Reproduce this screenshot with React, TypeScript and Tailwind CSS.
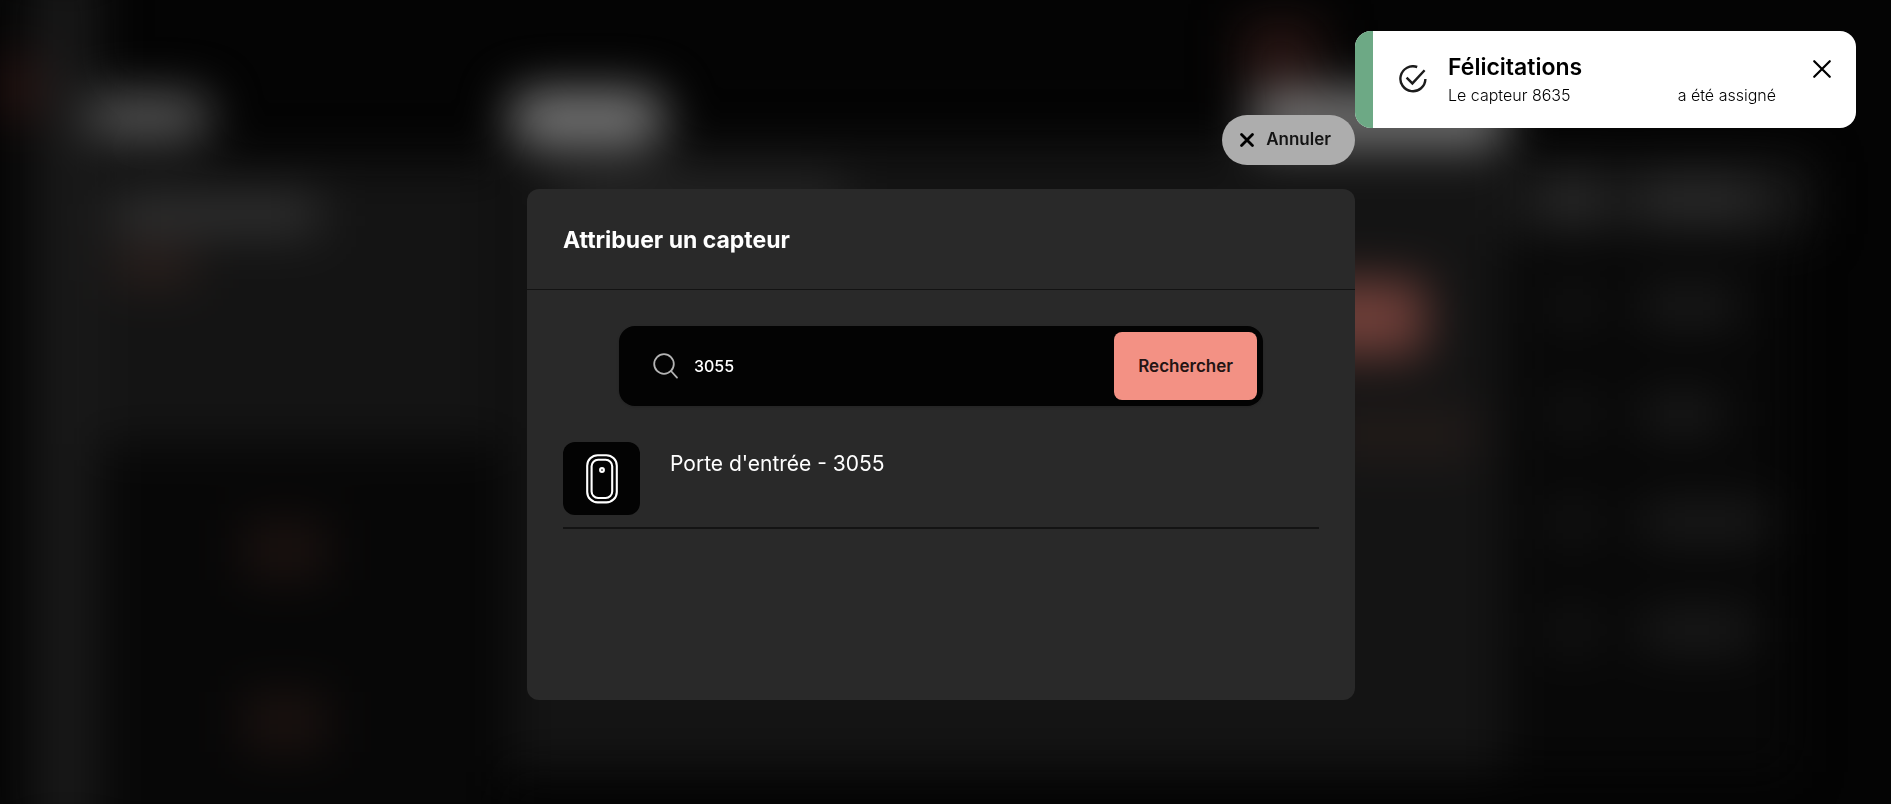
import { useState } from "react";

const menuItems = [
  { id: 1, width: "w-24" },
  { id: 2, width: "w-20" },
  { id: 3, width: "w-32" },
  { id: 4, width: "w-28" },
];

const SearchIcon = () => (
  <svg width="26" height="26" viewBox="0 0 26 26" fill="none" stroke="#b4b4b4" strokeWidth="1.8" strokeLinecap="round" aria-hidden="true">
    <circle cx="11" cy="11" r="9.8" />
    <path d="M18 18L24 24.6" />
  </svg>
);

const SensorIcon = () => (
  <svg width="32" height="50" viewBox="0 0 32 50" fill="none" stroke="#fff" strokeWidth="2.1" aria-hidden="true">
    <rect x="1.2" y="1.2" width="29.6" height="47.2" rx="10.5" />
    <rect x="5.6" y="5.8" width="20.6" height="38.2" rx="6.5" />
    <circle cx="16" cy="16" r="1.9" />
  </svg>
);

const CheckIcon = () => (
  <svg width="28" height="28" viewBox="0 0 28 28" fill="none" stroke="#1c1c1c" strokeWidth="2.4" aria-hidden="true">
    <path d="M18.2 2A12.5 12.5 0 1 0 26.4 14" />
    <path d="M7.6 12.6L13.4 18.4L25.6 5.2" />
  </svg>
);

const CloseIcon = ({ size, stroke }: { size: number; stroke: number }) => (
  <svg width={size} height={size} viewBox="0 0 18 18" fill="none" stroke="currentColor" strokeWidth={stroke} strokeLinecap="round" aria-hidden="true">
    <path d="M2 2L16 16M16 2L2 16" />
  </svg>
);

// Dashboard that stays behind the dialog, dimmed and out of focus
const Backdrop = () => (
  <div className="fixed inset-0 -z-10 overflow-hidden bg-[#040404]" aria-hidden="true">
    <div className="-my-8 flex h-[calc(100%+64px)] py-8 blur-[24px]">
      <div className="-my-8 flex w-9 shrink-0 bg-[#080808] pt-[88px]">
        <div className="h-[64px] w-[50px] shrink-0 bg-[#2a1412]" />
      </div>
      <div className="-my-8 w-[62px] shrink-0 bg-[#191919]" />

      <div className="flex w-[402px] shrink-0 flex-col pt-[94px]">
        <div className="-ml-3 h-[46px] w-[126px] rounded-full bg-[#585858]" />
        <div className="mt-5 h-[284px] bg-[#141414] pl-4 pt-9">
          <div className="h-9 w-[204px] bg-[#343434]" />
          <div className="mt-4 h-9 w-[80px] bg-[#2c201d]" />
        </div>
        <div className="-mb-8 flex grow flex-col gap-[112px] bg-[#070707] pl-[145px] pt-[76px]">
          <div className="h-[60px] w-[84px] bg-[#1b1210]" />
          <div className="h-[60px] w-[84px] bg-[#1b1210]" />
        </div>
      </div>

      <div className="ml-2 flex grow flex-col pb-8 pt-5">
        <div className="flex items-end justify-between">
          <div className="h-[56px] w-[158px] rounded-full bg-[#787878]" />
          <div className="w-[276px]">
            <div className="ml-3 h-[70px] w-[80px] bg-[#261412]" />
            <div className="ml-6 h-[56px] bg-[#747474]" />
          </div>
        </div>
        <div className="flex grow flex-col items-end bg-[#141414] pt-[30px]">
          <div className="mr-auto ml-14 h-9 w-[280px] bg-[#272727]" />
          <div className="mr-[80px] mt-[68px] h-[76px] w-[170px] bg-[#703f39]" />
          <div className="mr-7 mt-[54px] h-12 w-[150px] bg-[#221b19]" />
        </div>
      </div>

      <div className="flex w-[386px] shrink-0 flex-col pb-8 pt-[162px]">
        <div className="mr-[80px] flex h-[72px] items-center gap-12 bg-[#191919] pl-12">
          <div className="h-12 w-10 bg-[#2e2e2e]" />
          <div className="h-10 w-28 bg-[#2c2c2c]" />
        </div>
        <div className="mr-[100px] flex grow flex-col gap-[68px] bg-[#080808] pl-12 pt-[52px]">
          {menuItems.map((item) => (
            <div key={item.id} className="flex items-center gap-12">
              <div className="h-10 w-10 bg-[#171717]" />
              <div className={`h-9 bg-[#1d1d1d] ${item.width}`} />
            </div>
          ))}
        </div>
      </div>
    </div>
  </div>
);

const Toast = ({ onClose }: { onClose: () => void }) => (
  <div role="status" className="fixed right-[35px] top-[31px] flex h-[97px] w-[501px] overflow-hidden rounded-2xl bg-white text-black">
    <div className="w-[18px] shrink-0 bg-[#6da985]" />
    <div className="flex grow items-start pl-[26px] pr-6">
      <div className="pt-[34px]">
        <CheckIcon />
      </div>
      <div className="grow pl-[21px] pt-[22px]">
        <p className="text-[23px] font-semibold leading-7">Félicitations</p>
        <p className="flex justify-between pr-9 text-base font-light leading-7">
          <span>Le capteur 8635</span>
          <span>a été assigné</span>
        </p>
      </div>
      <button type="button" aria-label="Fermer" onClick={onClose} className="mt-7 cursor-pointer">
        <CloseIcon size={20} stroke={2} />
      </button>
    </div>
  </div>
);

const App = () => {
  const [query, setQuery] = useState("3055");
  const [showToast, setShowToast] = useState(true);

  return (
    <div className="font-['Inter','Liberation_Sans',sans-serif]">
      <Backdrop />

      <main className="pr-[9px] pt-[115px]">
        <div className="mx-auto flex max-w-[828px] flex-col items-end gap-6">
          <button
            type="button"
            className="flex h-[50px] cursor-pointer items-center gap-3 rounded-full bg-[#adadad] pl-[18px] pr-6 text-[17px] font-semibold text-[#141414]"
          >
            <span className="text-black">
              <CloseIcon size={14} stroke={3.6} />
            </span>
            Annuler
          </button>

          <section className="min-h-[511px] w-full rounded-xl bg-[#292929] text-white">
            <header className="flex h-[101px] items-center border-b border-[#131313] px-9 pt-0.5">
              <h1 className="text-[23px] font-bold leading-8">Attribuer un capteur</h1>
            </header>

            <div className="px-9 pt-9">
              <form
                onSubmit={(e) => e.preventDefault()}
                className="mx-14 flex h-20 items-center rounded-2xl bg-[#030303] p-1.5 pl-[34px] shadow-sm"
              >
                <label htmlFor="sensor" aria-label="Capteur">
                  <SearchIcon />
                </label>
                <input
                  id="sensor"
                  type="text"
                  value={query}
                  onChange={(e) => setQuery(e.target.value)}
                  className="min-w-0 grow bg-transparent px-[15px] text-base font-medium text-white outline-none"
                />
                <button
                  type="submit"
                  className="h-full cursor-pointer rounded-lg bg-[#f39184] px-6 pt-0.5 text-[17px] font-semibold text-[#241413]"
                >
                  Rechercher
                </button>
              </form>

              <ul className="mt-9">
                <li className="flex items-start gap-[30px] border-b-2 border-[#131313] pb-3">
                  <div className="flex h-[73px] w-[77px] items-center justify-center rounded-xl bg-[#030303]">
                    <SensorIcon />
                  </div>
                  <p className="pt-1.5 text-[21px] leading-8">Porte d'entrée - 3055</p>
                </li>
              </ul>
            </div>
          </section>
        </div>
      </main>

      {showToast && <Toast onClose={() => setShowToast(false)} />}
    </div>
  );
};

export default App;
